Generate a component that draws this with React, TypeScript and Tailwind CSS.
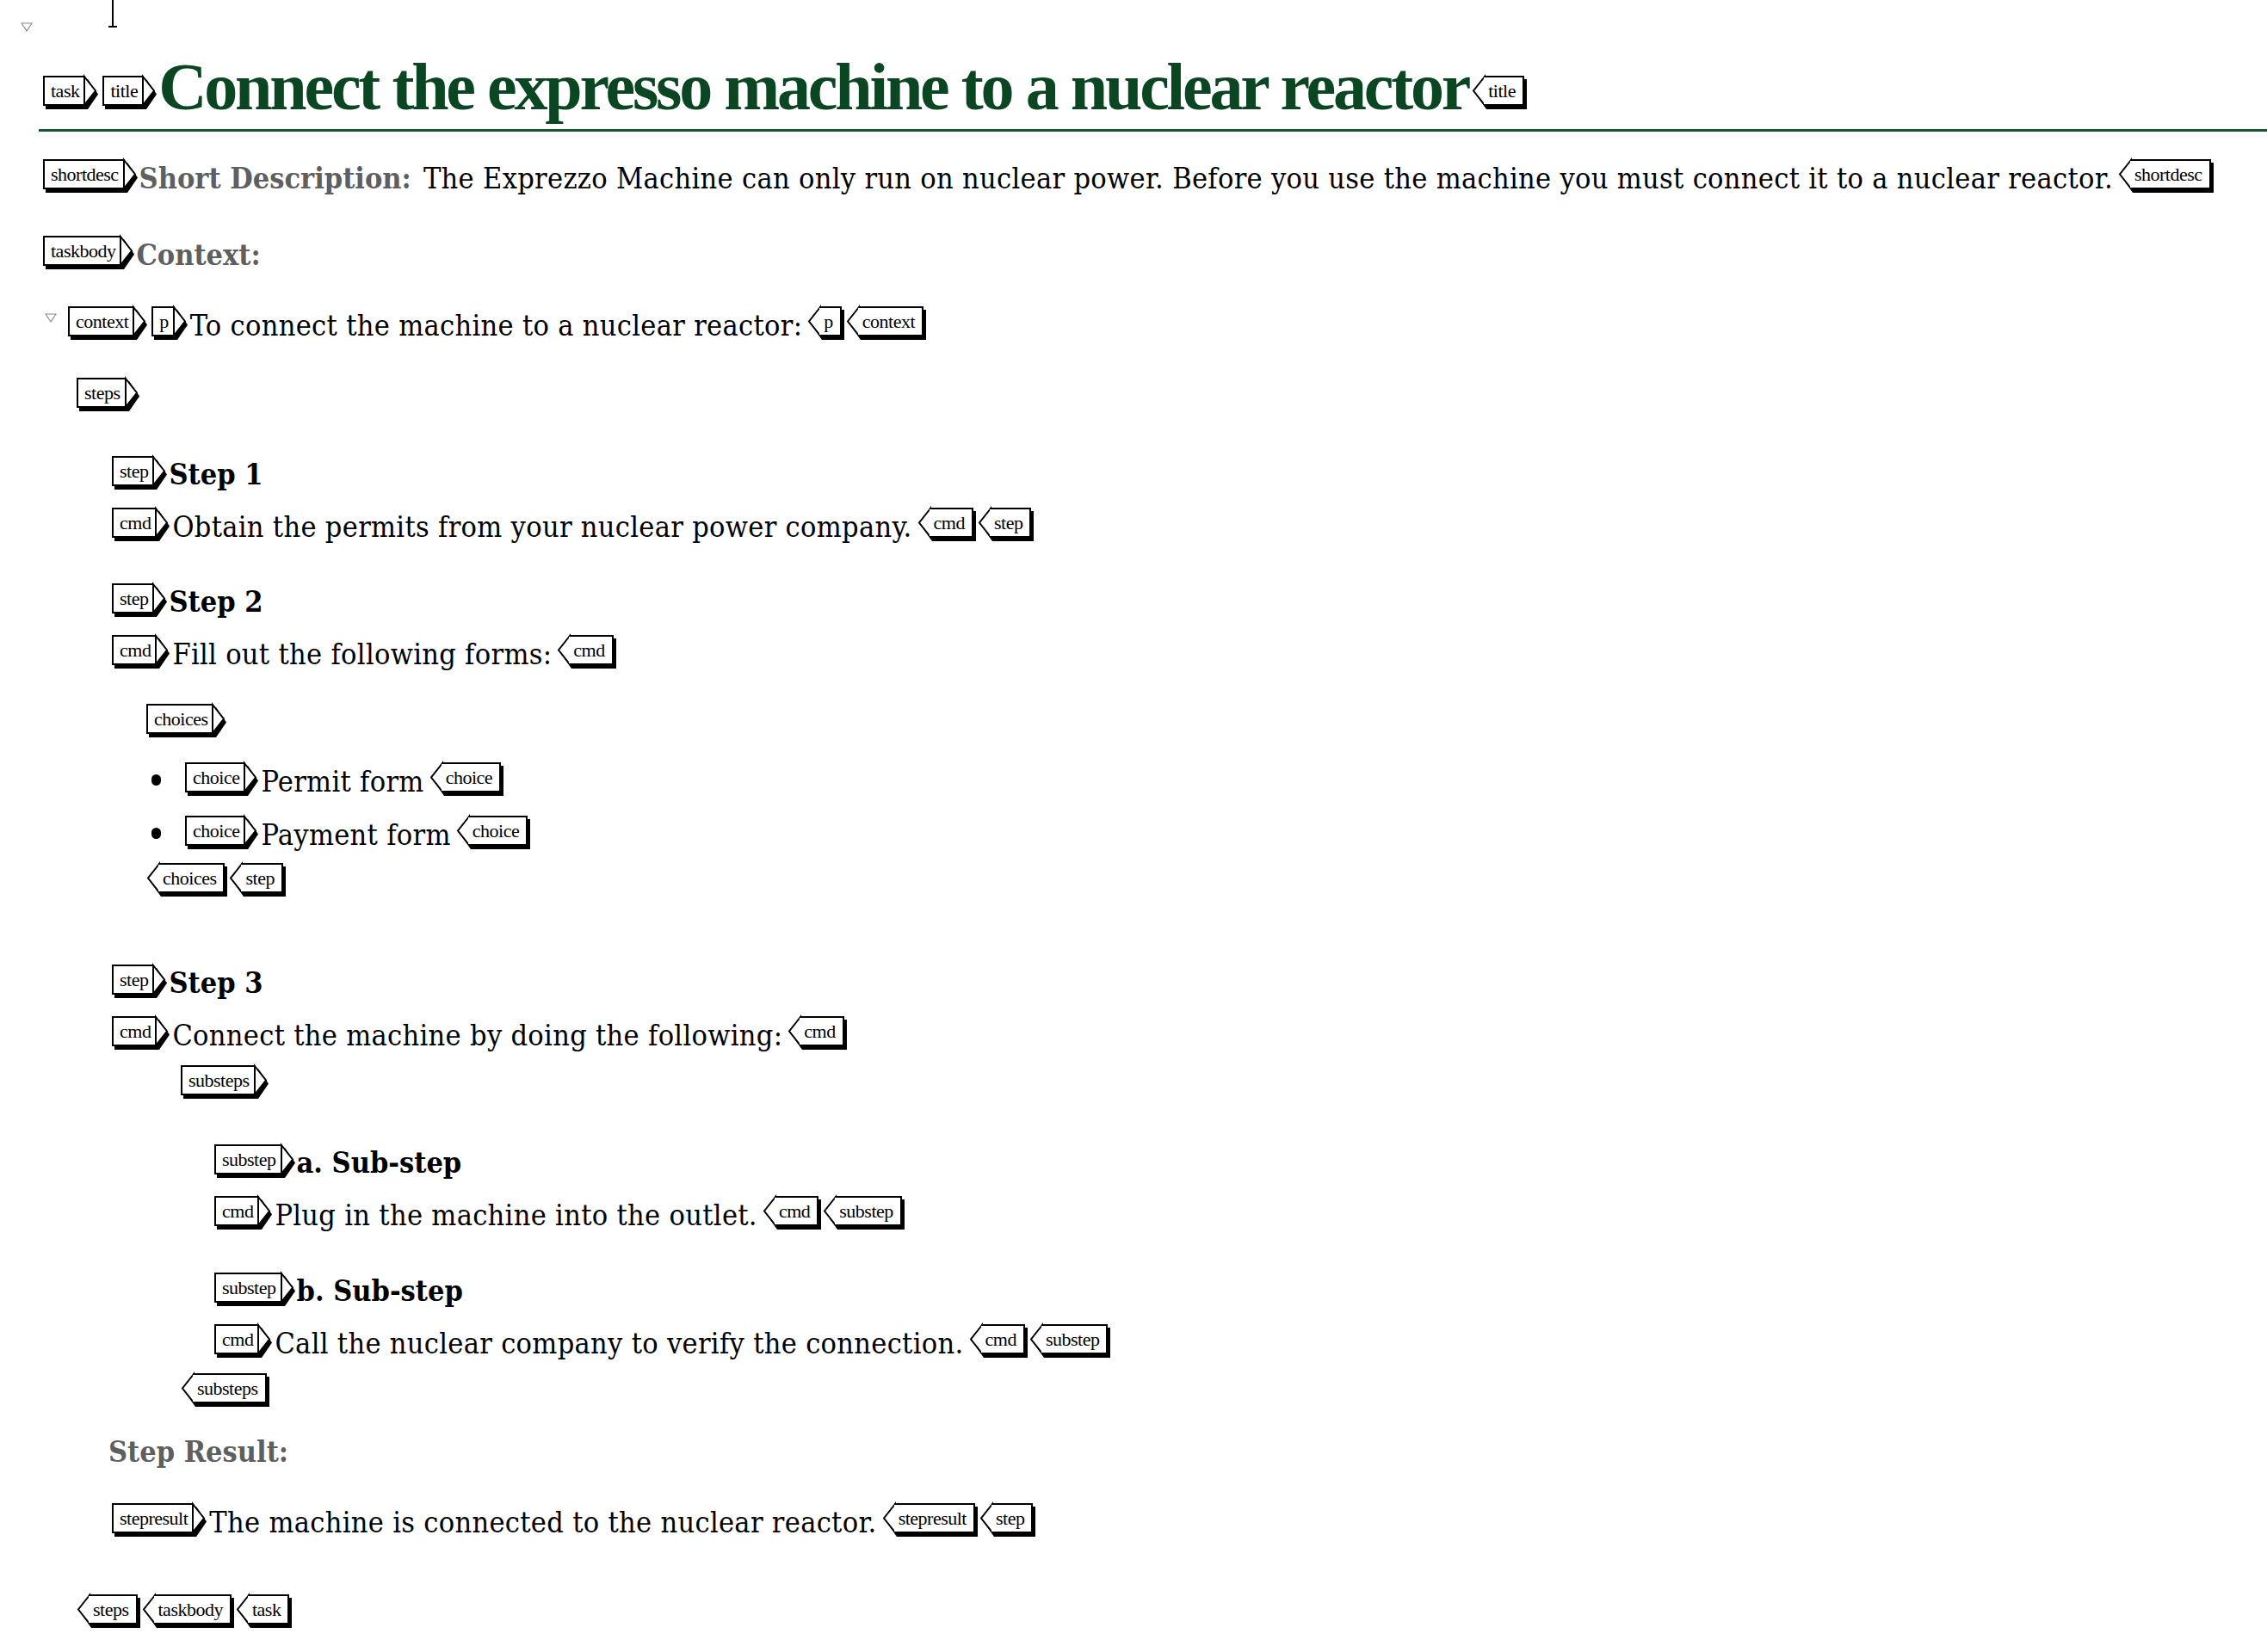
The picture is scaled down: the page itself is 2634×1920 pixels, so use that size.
import type { ReactNode } from 'react';

const serif = "font-['DejaVu_Serif_Condensed','DejaVu_Serif',serif] font-stretch-condensed";

function Tag({ name, end }: { name: string; end?: boolean }) {
  const box = end
    ? 'border-y-2 border-r-2 pl-[5px] pr-[8px]'
    : 'border-y-2 border-l-2 pl-[7px] pr-[7px]';
  return (
    <span className="inline-flex h-[40px] shrink-0 items-start">
      {end && (
        <svg width="14" height="40" viewBox="0 0 14 40" overflow="visible" className="shrink-0">
          <polygon points="17,4 5,21.5 17,39" fill="#000" />
          <polygon points="15,1 2,17.5 15,34" fill="#fff" stroke="#000" strokeWidth="2" />
        </svg>
      )}
      <span
        className={`flex h-[35px] items-center border-black bg-white font-['Liberation_Serif',serif] text-[22px] leading-none tracking-[-0.5px] text-black shadow-[3px_4px_0_#000] ${box}`}
      >
        {name}
      </span>
      {!end && (
        <svg width="14" height="40" viewBox="0 0 14 40" overflow="visible" className="shrink-0">
          <polygon points="3,4 15,21.5 3,39" fill="#000" />
          <polygon points="-1,1 12,17.5 -1,34" fill="#fff" stroke="#000" strokeWidth="2" />
        </svg>
      )}
    </span>
  );
}

function Row({ className, children }: { className: string; children: ReactNode }) {
  return <div className={`flex h-[44px] items-center whitespace-nowrap ${className}`}>{children}</div>;
}

function Text({ children }: { children: ReactNode }) {
  return (
    <span className={`${serif} ml-[4px] mr-[6px] mt-[4px] text-[34px] leading-none tracking-[0.3px] text-black`}>
      {children}
    </span>
  );
}

function Heading({ children }: { children: ReactNode }) {
  return <span className={`${serif} ml-[3px] mt-[2px] text-[34px] font-bold leading-none text-black`}>{children}</span>;
}

function Label({ children }: { children: ReactNode }) {
  return (
    <span className={`${serif} ml-[3px] mt-[4px] text-[34px] font-bold leading-none text-[#5f5f5f]`}>{children}</span>
  );
}

function Toggle() {
  return (
    <svg width="14" height="11" viewBox="0 0 14 11" className="shrink-0">
      <polygon points="1,1 13,1 7,10" fill="#fff" stroke="#8a8a8a" strokeWidth="1.2" />
    </svg>
  );
}

function Bullet() {
  return <span className="ml-[6px] mr-[28px] h-[13px] w-[11px] shrink-0 rounded-full bg-black" />;
}

export default function App() {
  return (
    <div className="min-h-screen w-full overflow-hidden bg-white pb-[20px]">
      <div className="flex h-[40px] items-start">
        <div className="ml-[24px] mt-[26px]">
          <Toggle />
        </div>
        <svg width="20" height="34" viewBox="0 0 20 34" className="ml-[83px] shrink-0">
          <path d="M10 0 V31 M5 31 H15" stroke="#000" strokeWidth="2" fill="none" />
        </svg>
      </div>

      <div className="ml-[45px] mt-[34px] border-b-[3px] border-[#1b5530] pb-[22px] pl-[5px]">
        <div className="flex items-end whitespace-nowrap">
          <Tag name="task" />
          <span className="w-[6px]" />
          <Tag name="title" />
          <span className="ml-[3px] mr-[4px] font-['Liberation_Serif',serif] text-[78px] font-bold leading-[54px] tracking-[-3.2px] text-[#0b4622]">
            Connect the expresso machine to a nuclear reactor
          </span>
          <Tag name="title" end />
        </div>
      </div>

      <Row className="ml-[50px] mt-[30px]">
        <Tag name="shortdesc" />
        <Label>Short Description:</Label>
        <Text>
          &nbsp;The Exprezzo Machine can only run on nuclear power. Before you use the machine you must connect it
          to a nuclear reactor.
        </Text>
        <Tag name="shortdesc" end />
      </Row>

      <Row className="ml-[50px] mt-[45px]">
        <Tag name="taskbody" />
        <Label>Context:</Label>
      </Row>

      <Row className="ml-[52px] mt-[38px]">
        <div className="mb-[14px] mr-[13px]">
          <Toggle />
        </div>
        <Tag name="context" />
        <span className="w-[6px]" />
        <Tag name="p" />
        <Text>To connect the machine to a nuclear reactor:</Text>
        <Tag name="p" end />
        <span className="w-[5px]" />
        <Tag name="context" end />
      </Row>

      <Row className="ml-[89px] mt-[39px]">
        <Tag name="steps" />
      </Row>

      <Row className="ml-[130px] mt-[47px]">
        <Tag name="step" />
        <Heading>Step 1</Heading>
      </Row>
      <Row className="ml-[130px] mt-[16px]">
        <Tag name="cmd" />
        <Text>Obtain the permits from your nuclear power company.</Text>
        <Tag name="cmd" end />
        <span className="w-[5px]" />
        <Tag name="step" end />
      </Row>

      <Row className="ml-[130px] mt-[44px]">
        <Tag name="step" />
        <Heading>Step 2</Heading>
      </Row>
      <Row className="ml-[130px] mt-[16px]">
        <Tag name="cmd" />
        <Text>Fill out the following forms:</Text>
        <Tag name="cmd" end />
      </Row>

      <Row className="ml-[170px] mt-[36px]">
        <Tag name="choices" />
      </Row>
      <Row className="ml-[170px] mt-[24px]">
        <Bullet />
        <Tag name="choice" />
        <Text>Permit form</Text>
        <Tag name="choice" end />
      </Row>
      <Row className="ml-[170px] mt-[18px]">
        <Bullet />
        <Tag name="choice" />
        <Text>Payment form</Text>
        <Tag name="choice" end />
      </Row>
      <Row className="ml-[170px] mt-[11px]">
        <Tag name="choices" end />
        <span className="w-[5px]" />
        <Tag name="step" end />
      </Row>

      <Row className="ml-[130px] mt-[74px]">
        <Tag name="step" />
        <Heading>Step 3</Heading>
      </Row>
      <Row className="ml-[130px] mt-[16px]">
        <Tag name="cmd" />
        <Text>Connect the machine by doing the following:</Text>
        <Tag name="cmd" end />
      </Row>
      <Row className="ml-[210px] mt-[13px]">
        <Tag name="substeps" />
      </Row>

      <Row className="ml-[249px] mt-[48px]">
        <Tag name="substep" />
        <Heading>a. Sub-step</Heading>
      </Row>
      <Row className="ml-[249px] mt-[16px]">
        <Tag name="cmd" />
        <Text>Plug in the machine into the outlet.</Text>
        <Tag name="cmd" end />
        <span className="w-[5px]" />
        <Tag name="substep" end />
      </Row>

      <Row className="ml-[249px] mt-[45px]">
        <Tag name="substep" />
        <Heading>b. Sub-step</Heading>
      </Row>
      <Row className="ml-[249px] mt-[16px]">
        <Tag name="cmd" />
        <Text>Call the nuclear company to verify the connection.</Text>
        <Tag name="cmd" end />
        <span className="w-[5px]" />
        <Tag name="substep" end />
      </Row>
      <Row className="ml-[210px] mt-[13px]">
        <Tag name="substeps" end />
      </Row>

      <Row className="ml-[123px] mt-[25px]">
        <Label>Step Result:</Label>
      </Row>
      <Row className="ml-[130px] mt-[38px]">
        <Tag name="stepresult" />
        <Text>The machine is connected to the nuclear reactor.</Text>
        <Tag name="stepresult" end />
        <span className="w-[5px]" />
        <Tag name="step" end />
      </Row>

      <Row className="ml-[89px] mt-[62px]">
        <Tag name="steps" end />
        <span className="w-[5px]" />
        <Tag name="taskbody" end />
        <span className="w-[5px]" />
        <Tag name="task" end />
      </Row>
    </div>
  );
}
